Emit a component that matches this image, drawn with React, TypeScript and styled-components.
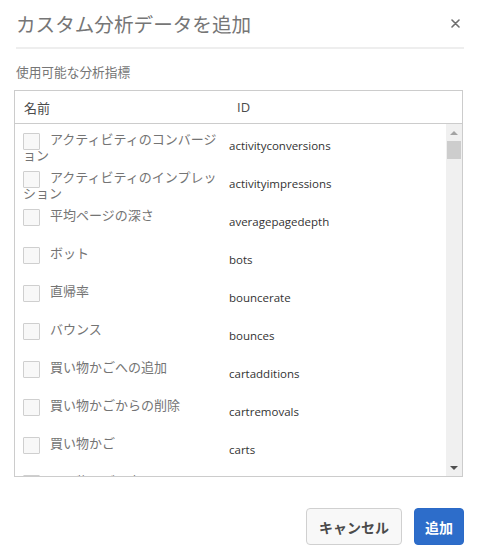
import React from "react";
import styled, { createGlobalStyle } from "styled-components";

const GlobalStyle = createGlobalStyle`
  html, body {
    margin: 0;
    padding: 0;
    background: #fff;
  }
  body {
    font-family: "Open Sans", "Noto Sans CJK JP", sans-serif;
  }
`;

const metrics = [
  { name: "アクティビティのコンバージョン", id: "activityconversions" },
  { name: "アクティビティのインプレッション", id: "activityimpressions" },
  { name: "平均ページの深さ", id: "averagepagedepth" },
  { name: "ボット", id: "bots" },
  { name: "直帰率", id: "bouncerate" },
  { name: "バウンス", id: "bounces" },
  { name: "買い物かごへの追加", id: "cartadditions" },
  { name: "買い物かごからの削除", id: "cartremovals" },
  { name: "買い物かご", id: "carts" },
  { name: "買い物かごの表示", id: "cartviews" },
];

const Dialog = styled.div`
  width: 478px;
  height: 559px;
  box-sizing: border-box;
  display: flex;
  flex-direction: column;
`;

const TitleBar = styled.div`
  height: 47px;
  margin: 0 14px 0 16px;
  border-bottom: 2px solid #eeeeee;
  display: flex;
  align-items: center;
  justify-content: space-between;
`;

const Title = styled.h1`
  margin: 0;
  font-family: "Noto Sans CJK JP", sans-serif;
  font-size: 19.6px;
  font-weight: 400;
  color: #767676;
  line-height: 28px;
`;

const CloseButton = styled.button`
  border: none;
  background: none;
  padding: 0;
  margin-right: 4px;
  width: 10px;
  height: 10px;
  display: flex;
  align-items: center;
  justify-content: center;
  cursor: pointer;
`;

const FieldLabel = styled.div`
  margin: 15px 0 0 16px;
  font-family: "Noto Sans CJK JP", sans-serif;
  font-size: 12.7px;
  line-height: 16px;
  color: #767676;
`;

const Table = styled.div`
  margin: 10px 15px 0 14px;
  border: 1px solid #cccccc;
  display: flex;
  flex-direction: column;
`;

const HeaderRow = styled.div`
  height: 32px;
  border-bottom: 1px solid #cccccc;
  display: grid;
  grid-template-columns: 213px 1fr;
  align-items: center;
  font-size: 13px;
  color: #4b4b4b;
`;

const HeaderCell = styled.div<{ $pad: number }>`
  padding-left: ${(p) => p.$pad}px;
  font-family: "Open Sans", "Noto Sans CJK JP", sans-serif;
`;

const Body = styled.div`
  height: 352px;
  display: flex;
`;

const Rows = styled.div`
  flex: 1;
  overflow: hidden;
  padding-top: 2px;
`;

const Row = styled.div`
  height: 38px;
  display: grid;
  grid-template-columns: 213px 1fr;
`;

const NameCell = styled.div`
  padding: 6px 4px 0 8px;
  font-family: "Noto Sans CJK JP", sans-serif;
  font-size: 13px;
  line-height: 13px;
  color: #747474;
  align-self: start;
`;

const Check = styled.span`
  display: inline-block;
  box-sizing: border-box;
  width: 17px;
  height: 17px;
  margin: -2px 10px -2px 0;
  vertical-align: -4px;
  border: 1px solid #cfcfcf;
  background: #f8f8f8;
  border-radius: 1px;
`;

const IdCell = styled.div`
  align-self: center;
  padding-left: 1px;
  font-family: "Open Sans", sans-serif;
  font-size: 11.5px;
  color: #333333;
`;

const ScrollBar = styled.div`
  width: 16px;
  background: #f0f0f0;
  display: flex;
  flex-direction: column;
  align-items: center;
`;

const Arrow = styled.div<{ $dir: "up" | "down" }>`
  height: 17px;
  width: 16px;
  display: flex;
  align-items: center;
  justify-content: center;
  &::before {
    content: "";
    width: 0;
    height: 0;
    border-left: 4px solid transparent;
    border-right: 4px solid transparent;
    ${(p) =>
      p.$dir === "up"
        ? "border-bottom: 4px solid #a3a3a3;"
        : "border-top: 4px solid #505050;"}
  }
`;

const Track = styled.div`
  flex: 1;
  width: 100%;
  display: flex;
  flex-direction: column;
  align-items: center;
`;

const Thumb = styled.div`
  width: 14px;
  height: 18px;
  background: #cdcdcd;
`;

const Footer = styled.div`
  margin-top: 31px;
  padding-right: 14px;
  display: flex;
  justify-content: flex-end;
  gap: 12px;
`;

const Button = styled.button<{ $primary?: boolean }>`
  height: 37px;
  padding: 0 ${(p) => (p.$primary ? 10 : 12)}px;
  border-radius: 4px;
  font-family: "Noto Sans CJK JP", sans-serif;
  font-size: 14px;
  font-weight: 700;
  cursor: pointer;
  border: 1px solid ${(p) => (p.$primary ? "#2b6ac7" : "#d0d0d0")};
  background: ${(p) => (p.$primary ? "#2d6dca" : "#f8f8f8")};
  color: ${(p) => (p.$primary ? "#ffffff" : "#4b4b4b")};
`;

export default function App() {
  return (
    <>
      <GlobalStyle />
      <Dialog>
        <TitleBar>
          <Title>カスタム分析データを追加</Title>
          <CloseButton aria-label="閉じる">
            <svg width="9" height="9" viewBox="0 0 9 9">
              <path
                d="M1 1 L8 8 M8 1 L1 8"
                stroke="#6f6f6f"
                strokeWidth="1.6"
                strokeLinecap="round"
              />
            </svg>
          </CloseButton>
        </TitleBar>
        <FieldLabel>使用可能な分析指標</FieldLabel>
        <Table>
          <HeaderRow>
            <HeaderCell $pad={9}>名前</HeaderCell>
            <HeaderCell $pad={9}>ID</HeaderCell>
          </HeaderRow>
          <Body>
            <Rows>
              {metrics.map((m) => (
                <Row key={m.id}>
                  <NameCell>
                    <Check />
                    {m.name}
                  </NameCell>
                  <IdCell>{m.id}</IdCell>
                </Row>
              ))}
            </Rows>
            <ScrollBar>
              <Arrow $dir="up" />
              <Track>
                <Thumb />
              </Track>
              <Arrow $dir="down" />
            </ScrollBar>
          </Body>
        </Table>
        <Footer>
          <Button>キャンセル</Button>
          <Button $primary>追加</Button>
        </Footer>
      </Dialog>
    </>
  );
}
